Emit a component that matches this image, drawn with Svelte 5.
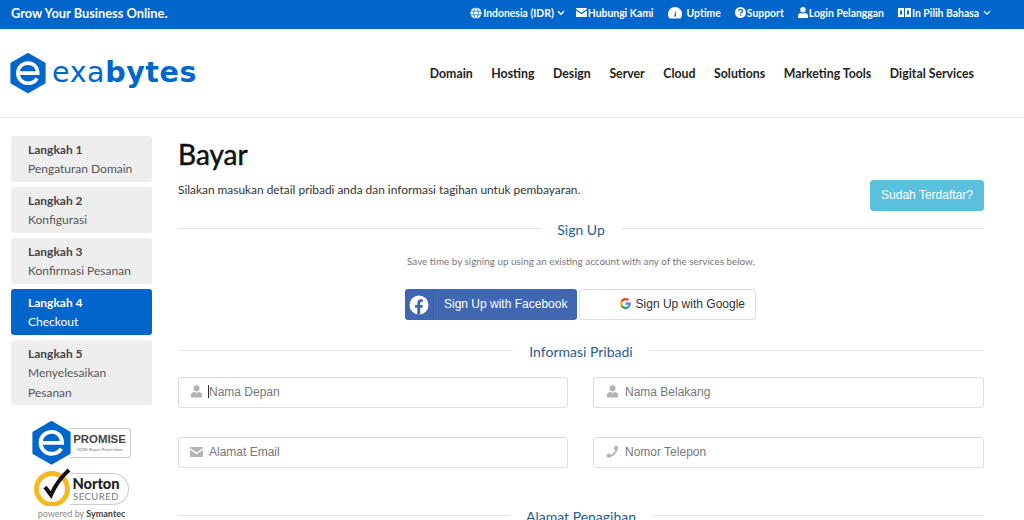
<script>
  const steps = [
    { title: 'Langkah 1', desc: 'Pengaturan Domain' },
    { title: 'Langkah 2', desc: 'Konfigurasi' },
    { title: 'Langkah 3', desc: 'Konfirmasi Pesanan' },
    { title: 'Langkah 4', desc: 'Checkout', active: true },
    { title: 'Langkah 5', desc: 'Menyelesaikan Pesanan' }
  ];
  const nav = ['Domain', 'Hosting', 'Design', 'Server', 'Cloud', 'Solutions', 'Marketing Tools', 'Digital Services'];
</script>

{#snippet hex(size)}
  <svg class="hex" width={size} height={size * 1.12} viewBox="0 0 100 112">
    <path d="M50 2 97 29V83L50 110 3 83V29Z" fill="#0066cc" stroke="#0066cc" stroke-width="4" stroke-linejoin="round" />
    <path d="M22 56H77C77 38 65 28 50 28 33 28 22 41 22 56S33 84 50 84C62 84 70 79 75 71" fill="none" stroke="#fff" stroke-width="10" />
  </svg>
{/snippet}

{#snippet userIcon()}
  <svg class="field-icon" width="13" height="13" viewBox="0 0 14 14">
    <circle cx="7" cy="3.6" r="3.3" fill="#b5b5b5" />
    <path d="M1 13.5V10.5C1 8.6 3 7.6 4.5 7.6 6 8.6 8 8.6 9.5 7.6 11 7.6 13 8.6 13 10.5V13.5Z" fill="#b5b5b5" />
  </svg>
{/snippet}

<div class="page">
  <div class="topbar">
    <span class="tagline">Grow Your Business Online.</span>
    <div class="toplinks">
      <span class="toplink currency">
        <svg width="12" height="12" viewBox="0 0 12 12"><circle cx="6" cy="6" r="5.6" fill="#fff" /><path d="M0 4.2H12M0 7.8H12M6 0C3 3 3 9 6 12M6 0C9 3 9 9 6 12" fill="none" stroke="#0066cc" stroke-width=".7" /></svg>
        Indonesia (IDR)
        <svg class="chev" width="8" height="6" viewBox="0 0 8 6"><path d="M1 1.2 4 4.2 7 1.2" fill="none" stroke="#fff" stroke-width="1.5" /></svg>
      </span>
      <span class="toplink">
        <svg width="11" height="9" viewBox="0 0 11 9"><path d="M0 1C0 .4.4 0 1 0H10C10.600 0 11 .4 11 1L5.500 4.800ZM0 2.400 5.500 6.200 11 2.400V8C11 8.600 10.600 9 10 9H1C.4 9 0 8.600 0 8Z" fill="#fff" /></svg>
        Hubungi Kami
      </span>
      <span class="toplink uptime">
        <svg width="14" height="12" viewBox="0 0 14 12"><path d="M1.500 11.500C.5 10.200 0 8.800 0 7 0 3.200 3.100 0 7 0S14 3.200 14 7C14 8.800 13.500 10.200 12.500 11.500Z" fill="#fff" /><path d="M6.200 9.500 7.600 3.500 8.200 9.500Z" fill="#0066cc" /></svg>
        Uptime
      </span>
      <span class="toplink">
        <svg width="11" height="11" viewBox="0 0 11 11"><circle cx="5.500" cy="5.500" r="5.500" fill="#fff" /><path d="M3.700 4.200C3.800 3 4.500 2.400 5.500 2.400 6.600 2.400 7.400 3 7.400 4 7.400 5.200 5.600 5.200 5.600 6.500" fill="none" stroke="#0066cc" stroke-width="1.300" /><rect x="4.900" y="7.400" width="1.400" height="1.400" fill="#0066cc" /></svg>
        Support
      </span>
      <span class="toplink">
        <svg width="10" height="11" viewBox="0 0 10 11"><circle cx="5" cy="2.800" r="2.700" fill="#fff" /><path d="M0 11V8.500C0 7 1.500 6 3 6 4 6.800 6 6.800 7 6 8.500 6 10 7 10 8.500V11Z" fill="#fff" /></svg>
        Login Pelanggan
      </span>
      <span class="toplink">
        <svg width="13" height="9" viewBox="0 0 13 9"><rect width="6" height="9" fill="#fff" /><rect x="7" width="6" height="9" fill="#fff" /><rect x="2" y="2.500" width="2" height="4" fill="#0066cc" /><rect x="9" y="2.500" width="2" height="4" fill="#0066cc" /></svg>
        In Pilih Bahasa
        <svg class="chev" width="8" height="6" viewBox="0 0 8 6"><path d="M1 1.200 4 4.200 7 1.200" fill="none" stroke="#fff" stroke-width="1.200" /></svg>
      </span>
    </div>
  </div>

  <header class="header">
    <div class="logo">
      {@render hex(36)}
      <span class="wordmark"><span class="exa">exa</span><b>bytes</b></span>
    </div>
    <nav class="nav">
      {#each nav as item}
        <span>{item}</span>
      {/each}
    </nav>
  </header>

  <div class="content">
    <aside class="sidebar">
      <ul class="steps">
        {#each steps as step}
          <li class="step" class:active={step.active}>
            <strong>{step.title}</strong>
            <span>{step.desc}</span>
          </li>
        {/each}
      </ul>
      <div class="badge promise">
        {@render hex(39)}
        <div class="promise-box">
          <span class="promise-title">PROMISE</span>
          <span class="promise-sub">100% Buyer Protection</span>
        </div>
      </div>
      <div class="badge norton">
        <div class="norton-row">
          <svg class="norton-mark" width="40" height="38" viewBox="0 0 40 38">
            <circle cx="18" cy="21" r="15.500" fill="#fff" stroke="#f6b921" stroke-width="5" />
            <path d="M11 19 17 27C20 20 26 10 35 2" fill="none" stroke="#111" stroke-width="4" />
          </svg>
          <div class="norton-box">
            <span class="norton-title">Norton</span>
            <span class="norton-sub">SECURED</span>
          </div>
        </div>
        <span class="norton-by">powered by <b>Symantec</b></span>
      </div>
    </aside>

    <main class="main">
      <div class="intro">
        <div>
          <h1>Bayar</h1>
          <p class="lead">Silakan masukan detail pribadi anda dan informasi tagihan untuk pembayaran.</p>
        </div>
        <button class="btn-login">Sudah Terdaftar?</button>
      </div>

      <div class="divider first"><span>Sign Up</span></div>
      <p class="hint">Save time by signing up using an existing account with any of the services below.</p>

      <div class="social">
        <button class="btn-fb">
          <span class="fb-icon">
            <svg width="20" height="20" viewBox="0 0 20 20">
              <circle cx="10" cy="10" r="9.500" fill="#fff" />
              <path d="M8.300 19.500V12.800H6V10H8.300V8C8.300 5.600 9.700 4.300 11.900 4.300 12.900 4.300 13.900 4.500 13.900 4.500V6.800H12.800C11.600 6.800 11.200 7.500 11.200 8.300V10H13.800L13.400 12.800H11.200V19.500Z" fill="#4267b2" />
            </svg>
          </span>
          <span class="fb-label">Sign Up with Facebook</span>
        </button>
        <button class="btn-google">
          <svg width="11" height="11" viewBox="0 0 48 48">
            <path fill="#ea4335" d="M24 9.500c3.500 0 6.700 1.300 9.100 3.500l6.800-6.800C35.800 2.400 30.200 0 24 0 14.600 0 6.500 5.400 2.600 13.200l7.900 6.200C12.400 13.700 17.700 9.500 24 9.500z" />
            <path fill="#4285f4" d="M46.900 24.500c0-1.600-.1-3.100-.4-4.500H24v9h12.900c-.6 3-2.200 5.500-4.700 7.200l7.600 5.900c4.400-4.100 7.100-10.200 7.100-17.600z" />
            <path fill="#fbbc05" d="M10.500 28.600c-.5-1.500-.8-3-.8-4.600s.3-3.100.8-4.600l-7.900-6.200C.9 16.500 0 20.100 0 24s.9 7.500 2.600 10.800z" />
            <path fill="#34a853" d="M24 48c6.500 0 11.900-2.100 15.900-5.900l-7.600-5.900c-2.100 1.400-4.900 2.300-8.200 2.300-6.300 0-11.600-4.200-13.500-9.900l-7.900 6.200C6.500 42.600 14.600 48 24 48z" />
          </svg>
          <span>Sign Up with Google</span>
        </button>
      </div>

      <div class="divider second"><span>Informasi Pribadi</span></div>

      <div class="fields">
        <div class="field">
          {@render userIcon()}
          <span class="caret"></span><span class="placeholder">Nama Depan</span>
        </div>
        <div class="field">
          {@render userIcon()}
          <span class="placeholder">Nama Belakang</span>
        </div>
        <div class="field">
          <svg class="field-icon" width="13" height="10" viewBox="0 0 13 10"><path d="M0 1C0 .4.4 0 1 0H12C12.600 0 13 .4 13 1L6.500 5.400ZM0 2.800 6.500 7.200 13 2.800V9C13 9.600 12.600 10 12 10H1C.4 10 0 9.600 0 9Z" fill="#b5b5b5" /></svg>
          <span class="placeholder">Alamat Email</span>
        </div>
        <div class="field">
          <svg class="field-icon" width="13" height="13" viewBox="0 0 13 13"><path d="M9 .4 12 1.200C12.400 7 7 12.800 1.200 12.600L.4 9.600 3.600 8.200 4.900 9.800C6.800 8.900 8.400 7.300 9.300 5.300L7.700 4Z" fill="#b5b5b5" /></svg>
          <span class="placeholder">Nomor Telepon</span>
        </div>
      </div>

      <div class="divider third"><span>Alamat Penagihan</span></div>
    </main>
  </div>
</div>

<style>
  :global(body) {
    margin: 0;
    background: #fff;
  }

  .page {
    width: 1024px;
    height: 520px;
    overflow: hidden;
    font-family: Lato, sans-serif;
    color: #333;
  }

  /* Top bar */
  .topbar {
    height: 29px;
    background: #0066cc;
    color: #fff;
    display: flex;
    align-items: center;
    justify-content: space-between;
    padding: 0 33px 4px 11px;
    box-sizing: border-box;
  }

  .tagline {
    font-size: 12.800px;
    font-weight: 700;
  }

  .toplinks {
    display: flex;
    align-items: center;
    gap: 14px;
    font-size: 10.400px;
    font-weight: 700;
  }

  .toplink {
    display: flex;
    align-items: center;
    gap: 1px;
  }

  .toplink .chev {
    margin-left: 3px;
  }

  .currency {
    margin-right: -3px;
  }

  .currency .chev {
    margin-left: 2px;
  }

  .uptime {
    gap: 5px;
  }

  /* Header */
  .header {
    height: 89px;
    box-sizing: border-box;
    border-bottom: 1px solid #e8e8e8;
    display: flex;
    align-items: center;
    justify-content: space-between;
    padding: 0 50px 0 10px;
  }

  .logo {
    display: flex;
    align-items: center;
    gap: 6px;
    color: #0066cc;
  }

  .hex {
    display: block;
    flex: none;
  }

  .wordmark {
    font-family: "DejaVu Sans", sans-serif;
    font-size: 28.500px;
    line-height: 1;
    letter-spacing: .6px;
  }

  .wordmark .exa {
    font-weight: 400;
  }

  .wordmark b {
    font-weight: 700;
  }

  .nav {
    display: flex;
    gap: 18.600px;
    font-size: 12.300px;
    font-weight: 700;
    color: #222;
  }

  /* Page body */
  .content {
    display: flex;
    align-items: flex-start;
    padding: 18px 40px 0 11px;
    gap: 26px;
  }

  .sidebar {
    width: 141px;
    flex: none;
  }

  .steps {
    list-style: none;
    margin: 0;
    padding: 0;
    display: flex;
    flex-direction: column;
    gap: 5px;
  }

  .step {
    background: #eee;
    border-radius: 3px;
    padding: 4px 5px 3.400px 17px;
    font-size: 12px;
    line-height: 19.300px;
    color: #555;
  }

  .step strong {
    display: block;
    font-weight: 700;
    color: #444;
  }

  .step span {
    display: block;
    max-width: 110px;
  }

  .step.active {
    background: #0066cc;
    color: #fff;
  }

  .step.active strong {
    color: #fff;
  }

  .badge {
    display: flex;
    justify-content: center;
  }

  .promise {
    align-items: center;
    margin-top: 16px;
  }

  .promise-box {
    border: 1.500px solid #ccc;
    border-left: 0;
    border-radius: 0 3px 3px 0;
    padding: 0 4px 0 3px;
    margin-left: -1px;
    display: flex;
    flex-direction: column;
    align-items: center;
    line-height: 1;
    height: 30px;
    box-sizing: border-box;
    justify-content: center;
  }

  .promise-title {
    font-family: "Liberation Sans", sans-serif;
    font-size: 11.400px;
    font-weight: 700;
    color: #444;
  }

  .promise-sub {
    font-size: 4.500px;
    color: #777;
    margin-top: 2px;
  }

  .norton {
    flex-direction: column;
    align-items: center;
    margin-top: 3px;
  }

  .norton-row {
    display: flex;
    align-items: flex-end;
  }

  .norton-mark {
    display: block;
    position: relative;
    z-index: 1;
  }

  .norton-box {
    border: 1px solid #ccc;
    border-left: 0;
    border-radius: 0 16px 16px 0;
    height: 32px;
    box-sizing: border-box;
    margin: 0 0 1px -4px;
    padding: 1px 8px 0 2px;
    display: flex;
    flex-direction: column;
    align-items: center;
    justify-content: center;
    line-height: 1;
  }

  .norton-title {
    font-size: 14.600px;
    font-weight: 900;
    color: #222;
  }

  .norton-sub {
    font-size: 9.500px;
    letter-spacing: .5px;
    color: #777;
    margin-top: 1px;
  }

  .norton-by {
    font-size: 9px;
    color: #888;
    margin-top: 3px;
    line-height: 1;
  }

  .norton-by b {
    color: #444;
  }

  /* Main column */
  .main {
    flex: 1;
    min-width: 0;
  }

  .intro {
    display: flex;
    justify-content: space-between;
    align-items: flex-end;
    height: 75px;
  }

  h1 {
    margin: 0;
    font-size: 28px;
    font-weight: 400;
    line-height: 38px;
    color: #111;
    -webkit-text-stroke: .5px #111;
  }

  .lead {
    margin: 8px 0 12px;
    font-size: 11.900px;
    line-height: 18px;
    color: #333;
  }

  .btn-login {
    width: 114px;
    height: 31px;
    border: 1px solid #5bc0de;
    border-radius: 3px;
    background: #5bc0de;
    color: #fff;
    font-family: "Liberation Sans", sans-serif;
    font-size: 12px;
    padding: 0 0 2px;
  }

  .divider {
    display: flex;
    align-items: center;
    gap: 16px;
    font-size: 14px;
    line-height: 18px;
    color: #1f5d8f;
  }

  .divider span {
    padding-top: 3px;
  }

  .divider::before,
  .divider::after {
    content: "";
    flex: 1;
    height: 1px;
    background: #e5e5e5;
  }

  .divider.first {
    margin-top: 7px;
  }

  .divider.second {
    margin-top: 20px;
  }

  .divider.third {
    margin-top: 37px;
  }

  .hint {
    margin: 15px 0 0;
    text-align: center;
    font-size: 9.900px;
    line-height: 14px;
    color: #777;
  }

  .social {
    display: flex;
    justify-content: center;
    gap: 2px;
    margin-top: 21px;
    padding-right: 1px;
  }

  .btn-fb,
  .btn-google {
    height: 31px;
    border-radius: 3px;
    font-family: "Liberation Sans", sans-serif;
    font-size: 12px;
    padding: 0;
    display: flex;
    align-items: center;
    box-sizing: border-box;
  }

  .btn-fb {
    width: 172px;
    border: 0;
    background: #4267b2;
    color: #fff;
  }

  .fb-icon {
    width: 28px;
    height: 100%;
    flex: none;
    display: flex;
    align-items: center;
    justify-content: center;
    border-right: 1px solid #3a5ca1;
  }

  .fb-label {
    margin: 0 0 2px 10px;
  }

  .btn-google {
    width: 177px;
    border: 1px solid #ddd;
    background: #fff;
    color: #333;
    justify-content: flex-end;
    padding: 0 10px 2px 0;
    gap: 5px;
  }

  .fields {
    display: grid;
    grid-template-columns: 390px 391px;
    justify-content: space-between;
    row-gap: 29px;
    margin-top: 16px;
  }

  .field {
    height: 31px;
    box-sizing: border-box;
    border: 1px solid #ddd;
    border-radius: 3px;
    display: flex;
    align-items: center;
    padding: 0 0 2px 11px;
    font-family: "Liberation Sans", sans-serif;
    font-size: 12px;
    color: #777;
  }

  .field:nth-child(even) {
    padding-left: 12px;
  }

  .field-icon {
    width: 13px;
    flex: none;
    margin-right: 6px;
  }

  .caret {
    width: 1px;
    height: 13px;
    background: #333;
    margin-left: -1px;
  }

  .placeholder {
    display: block;
  }
</style>
